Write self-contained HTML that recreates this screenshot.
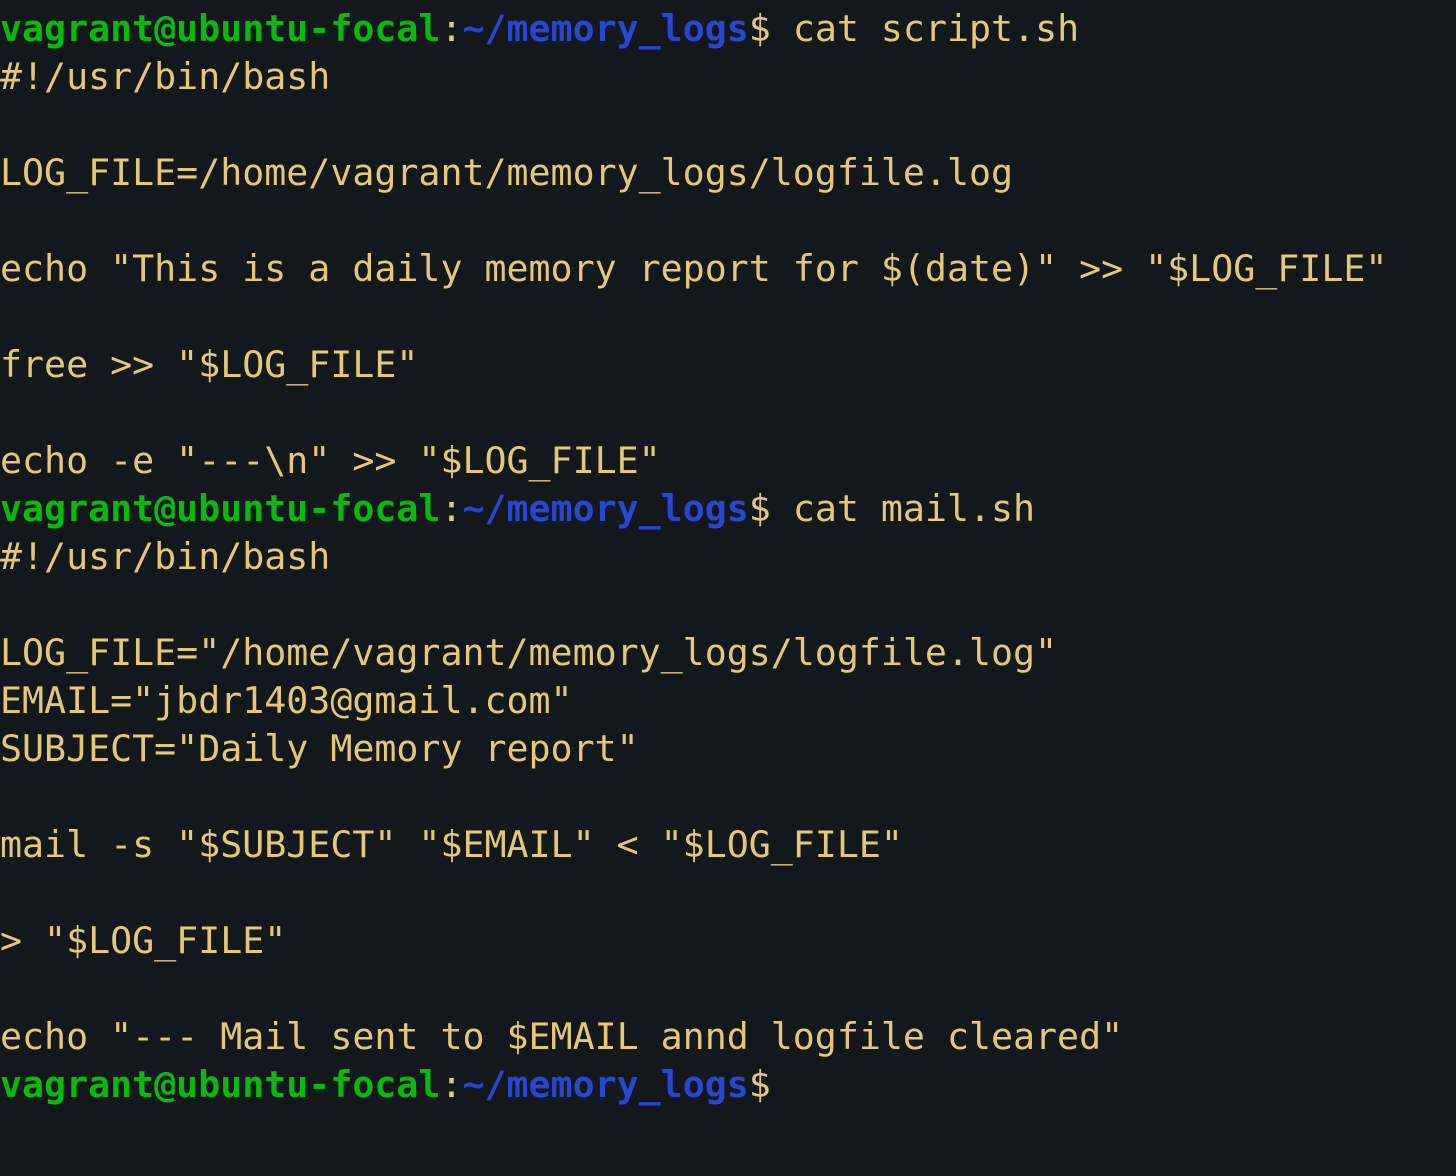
<!DOCTYPE html>
<html><head><meta charset="utf-8"><style>
html,body{margin:0;padding:0;background:#13181d;width:1456px;height:1176px;overflow:hidden}
pre{margin:0;padding:5px 0 0 0;font-family:"DejaVu Sans Mono","Liberation Mono",monospace;font-size:36.6px;line-height:48px;color:#e5c77a;white-space:pre}
.g{color:#0cb80c;font-weight:bold}
.b{color:#2a45d0;font-weight:bold}
</style></head><body><pre><span class="g">vagrant@ubuntu-focal</span>:<span class="b">~/memory_logs</span>$ cat script.sh
#!/usr/bin/bash

LOG_FILE=/home/vagrant/memory_logs/logfile.log

echo "This is a daily memory report for $(date)" >> "$LOG_FILE"

free >> "$LOG_FILE"

echo -e "---\n" >> "$LOG_FILE"
<span class="g">vagrant@ubuntu-focal</span>:<span class="b">~/memory_logs</span>$ cat mail.sh
#!/usr/bin/bash

LOG_FILE="/home/vagrant/memory_logs/logfile.log"
EMAIL="jbdr1403@gmail.com"
SUBJECT="Daily Memory report"

mail -s "$SUBJECT" "$EMAIL" &lt; "$LOG_FILE"

&gt; "$LOG_FILE"

echo "--- Mail sent to $EMAIL annd logfile cleared"
<span class="g">vagrant@ubuntu-focal</span>:<span class="b">~/memory_logs</span>$
</pre></body></html>
